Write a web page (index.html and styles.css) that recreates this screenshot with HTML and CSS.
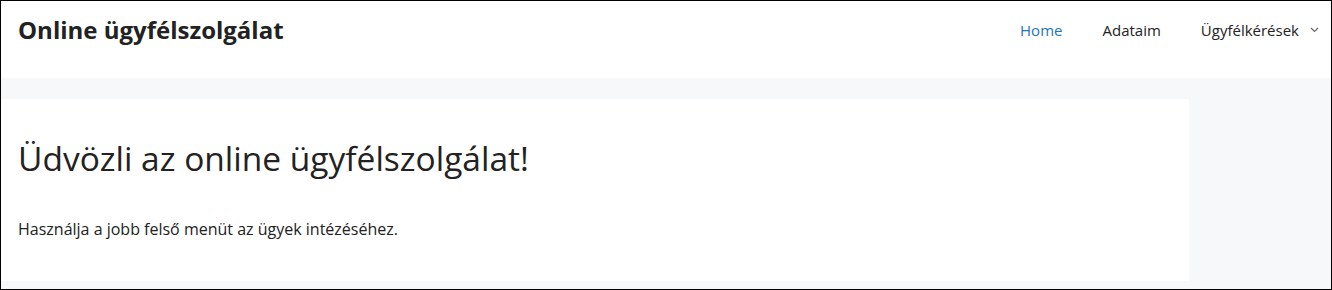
FILE: index.html
```html
<!DOCTYPE html>
<html lang="hu">
<head>
    <meta charset="UTF-8">
    <meta name="viewport" content="width=device-width, initial-scale=1.0">
    <title>Online ügyfélszolgálat</title>
    <link rel="stylesheet" href="styles.css">
</head>
<body>
    <div class="page">
        <header class="site-header">
            <div class="site-title">Online ügyfélszolgálat</div>
            <nav class="main-nav">
                <a href="#" class="current">Home</a>
                <a href="#">Adataim</a>
                <a href="#" class="has-sub">Ügyfélkérések<svg class="chevron" width="9" height="6" viewBox="0 0 9 6"><path d="M1 1l3.5 3.5L8 1" fill="none" stroke="#666" stroke-width="1.2"/></svg></a>
            </nav>
        </header>
        <div class="site-content">
            <main class="content-area">
                <h1>Üdvözli az online ügyfélszolgálat!</h1>
                <p>Használja a jobb felső menüt az ügyek intézéséhez.</p>
            </main>
            <aside class="sidebar"></aside>
        </div>
    </div>
</body>
</html>
```
FILE: styles.css
```css
html, body {
    margin: 0;
    height: 100%;
}
body {
    font-family: "Open Sans", "Noto Sans", sans-serif;
    color: #222;
    background-color: #f7f8f9;
}
.page {
    box-sizing: border-box;
    height: 290px;
    border: 1px solid #000;
    overflow: hidden;
}
.site-header {
    background: #fff;
    height: 77px;
    display: flex;
    justify-content: space-between;
    align-items: flex-start;
    padding-left: 17px;
}
.site-title {
    font-size: 24px;
    font-weight: 700;
    line-height: 58px;
    color: #222;
}
.main-nav {
    display: flex;
    height: 58px;
    align-items: center;
}
.main-nav a {
    font-size: 15px;
    color: #222;
    text-decoration: none;
    padding: 0 20px;
    display: flex;
    align-items: center;
}
.main-nav a.current {
    color: #1e73be;
}
.main-nav a.has-sub {
    padding-right: 12px;
}
.chevron {
    margin-left: 11px;
}
.site-content {
    display: grid;
    grid-template-columns: 1188px 1fr;
    margin-top: 21px;
}
.content-area {
    background: #fff;
    height: 182px;
    padding: 0 17px;
    overflow: hidden;
}
h1 {
    font-size: 33.5px;
    font-weight: 400;
    margin: 38px 0 0;
    line-height: 1.3;
}
p {
    font-size: 16px;
    margin: 37px 0 0;
}
```
